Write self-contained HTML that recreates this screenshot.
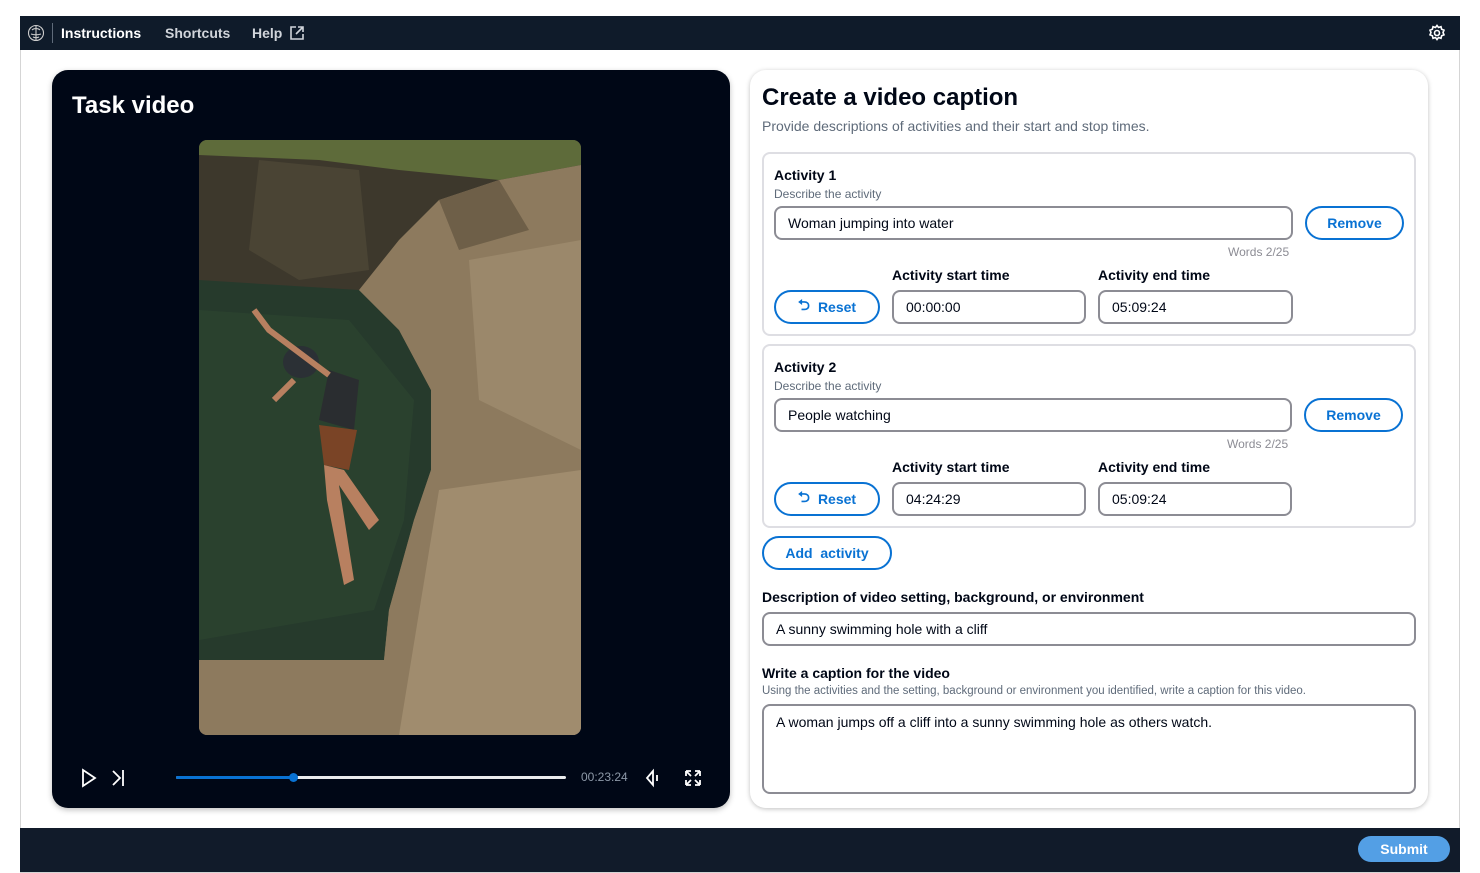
<!DOCTYPE html>
<html><head><meta charset="utf-8"><style>
*{box-sizing:border-box;margin:0;padding:0}
body{width:1480px;height:873px;background:#fff;font-family:"Liberation Sans",sans-serif;position:relative;overflow:hidden;color:#000716}
.frame{position:absolute;left:20px;top:16px;width:1440px;height:857px;border:1px solid #d5d5d5;background:#fff}
.nav{position:absolute;left:20px;top:16px;width:1440px;height:34px;background:#0f1b2a;color:#fff;font-weight:bold;font-size:14px}
.nav span{position:absolute;top:9px}
.foot{position:absolute;left:20px;top:828px;width:1440px;height:44px;background:#111b2a}
.submit{position:absolute;left:1358px;top:836px;width:92px;height:26px;border-radius:13px;background:#539fe5;color:#fff;font-weight:bold;font-size:14px;text-align:center;line-height:26px}
.vid{position:absolute;left:52px;top:70px;width:678px;height:738px;background:#000716;border-radius:16px;box-shadow:0 2px 6px rgba(0,0,0,.25)}
.card{position:absolute;left:750px;top:70px;width:678px;height:738px;background:#fff;border-radius:16px;box-shadow:0 1px 5px rgba(0,0,0,.25)}
.abs{position:absolute}
.box{position:absolute;border:2px solid #dedee3;border-radius:8px}
.inp{position:absolute;border:2px solid #8c8c94;border-radius:8px;font-size:14px;padding-left:12px;display:flex;align-items:center}
.btn{position:absolute;border:2px solid #0972d3;border-radius:18px;color:#0972d3;font-weight:bold;font-size:14px;display:flex;align-items:center;justify-content:center}
.lbl{position:absolute;font-size:14px;font-weight:bold}
.sub{position:absolute;font-size:12px;color:#5f6b7a}
</style></head><body>
<div class="frame"></div>
<div class="nav">
<svg class="abs" style="left:7px;top:8px" width="18" height="18" viewBox="0 0 18 18" fill="none" stroke="#ccc" stroke-width="1.1"><circle cx="9" cy="9" r="7.5"/><path d="M5 6c2-2 6-2 8 0M4 10c3 1 7 1 10 0M6 13c2 1 4 1 6 0M9 2v14"/></svg>
<div class="abs" style="left:32px;top:7px;width:1px;height:20px;background:#5f6b7a"></div>
<span style="left:41px">Instructions</span>
<span style="left:145px;color:#d1d5db">Shortcuts</span>
<span style="left:232px;color:#d1d5db">Help</span>
<svg class="abs" style="left:270px;top:10px" width="14" height="14" viewBox="0 0 14 14" fill="none" stroke="#d1d5db" stroke-width="1.6"><path d="M6 1H1v12h12V8M8 1h5v5M13 1L6 8"/></svg>
<svg class="abs" style="left:1408px;top:8px" width="18" height="18" viewBox="0 0 18 18" fill="none" stroke="#fff" stroke-width="1.6"><circle cx="9" cy="9" r="2.5"/><path d="M9 1.5l1.5 2 2.5-.8.6 2.5 2.4 1-1 2.3 1 2.3-2.4 1-.6 2.5-2.5-.8-1.5 2-1.5-2-2.5.8-.6-2.5-2.4-1 1-2.3-1-2.3 2.4-1 .6-2.5 2.5.8z"/></svg>
</div>

<div class="vid">
<div class="abs" style="left:20px;top:22px;color:#fff;font-weight:bold;font-size:24px">Task video</div>
<svg class="abs" style="left:147px;top:70px;border-radius:8px" width="382" height="595" viewBox="0 0 382 595">
<rect width="382" height="595" fill="#7d6b52"/>
<rect width="382" height="150" fill="#3d382c"/>
<path d="M0 0 L382 0 L382 25 L300 40 L200 30 L120 20 L0 15Z" fill="#5e6b3a"/>
<path d="M60 20 L160 30 L170 130 L100 140 L50 110Z" fill="#4a4434"/>
<path d="M0 140 L160 150 L200 190 L232 250 L232 330 L215 380 L190 470 L185 520 L60 520 L0 520Z" fill="#263a2c"/>
<path d="M0 170 L150 180 L215 260 L205 380 L175 470 L0 500Z" fill="#2c4430" opacity=".8"/>
<path d="M160 150 L200 100 L240 60 L300 40 L382 25 L382 595 L0 595 L0 520 L185 520 L190 470 L215 380 L232 330 L232 250 L200 190Z" fill="#8d7a5e"/>
<path d="M270 120 L382 100 L382 310 L280 260Z" fill="#9b886b"/>
<path d="M240 350 L382 330 L382 595 L200 595Z" fill="#a08c6e"/>
<path d="M240 60 L300 40 L330 90 L260 110Z" fill="#6e5f48"/>
<ellipse cx="102" cy="222" rx="18" ry="16" fill="#2b3035"/>
<path d="M130 230 L160 240 L155 290 L120 280Z" fill="#2a2d30"/>
<path d="M120 285 L158 290 L150 330 L125 325Z" fill="#7a4426"/>
<path d="M125 325 L145 330 L180 380 L170 390 L140 345 L155 440 L145 445 L128 360Z" fill="#b88060"/>
<path d="M130 235 L70 190 L55 170" stroke="#b88060" stroke-width="6" fill="none"/>
<path d="M95 240 L75 260" stroke="#b88060" stroke-width="6"/>
</svg>
<svg class="abs" style="left:28px;top:698px" width="18" height="20" viewBox="0 0 18 20" fill="none" stroke="#fff" stroke-width="1.8"><path d="M3 2l12 8-12 8z"/></svg>
<svg class="abs" style="left:58px;top:698px" width="16" height="20" viewBox="0 0 16 20" fill="none" stroke="#fff" stroke-width="1.8"><path d="M3 3l7 7-7 7M13 2v16"/></svg>
<div class="abs" style="left:124px;top:706px;width:390px;height:3px;background:#e9ebed;border-radius:2px"></div>
<div class="abs" style="left:124px;top:706px;width:118px;height:3px;background:#0972d3;border-radius:2px"></div>
<div class="abs" style="left:237px;top:703px;width:9px;height:9px;background:#0972d3;border-radius:50%"></div>
<div class="abs" style="left:529px;top:700px;color:#8d99a8;font-size:12px">00:23:24</div>
<svg class="abs" style="left:592px;top:698px" width="16" height="20" viewBox="0 0 16 20" fill="none" stroke="#fff" stroke-width="1.8"><path d="M9 3L3 10l6 7zM13 7v6"/></svg>
<svg class="abs" style="left:633px;top:700px" width="16" height="16" viewBox="0 0 16 16" fill="none" stroke="#fff" stroke-width="1.8"><path d="M1 1h5M1 1v5M1 1l5 5M15 1h-5M15 1v5M15 1l-5 5M1 15h5M1 15v-5M1 15l5-5M15 15h-5M15 15v-5M15 15l-5-5"/></svg>
</div>

<div class="card">
<div class="abs" style="left:12px;top:14px;font-weight:bold;font-size:24px">Create a video caption</div>
<div class="abs" style="left:12px;top:48px;font-size:14px;color:#5f6b7a">Provide descriptions of activities and their start and stop times.</div>

<div class="box" style="left:12px;top:82px;width:654px;height:184px"></div>
<div class="lbl" style="left:24px;top:97px">Activity 1</div>
<div class="sub" style="left:24px;top:117px">Describe the activity</div>
<div class="inp" style="left:24px;top:136px;width:519px;height:34px">Woman jumping into water</div>
<div class="btn" style="left:555px;top:136px;width:99px;height:34px">Remove</div>
<div class="sub" style="left:478px;top:175px;color:#8c8c94">Words 2/25</div>
<div class="lbl" style="left:142px;top:197px">Activity start time</div>
<div class="lbl" style="left:348px;top:197px">Activity end time</div>
<div class="btn" style="left:24px;top:220px;width:106px;height:34px"><span style="font-size:15px;margin-right:8px">⮌</span>Reset</div>
<div class="inp" style="left:142px;top:220px;width:194px;height:34px">00:00:00</div>
<div class="inp" style="left:348px;top:220px;width:195px;height:34px">05:09:24</div>

<div class="box" style="left:12px;top:274px;width:654px;height:184px"></div>
<div class="lbl" style="left:24px;top:289px">Activity 2</div>
<div class="sub" style="left:24px;top:309px">Describe the activity</div>
<div class="inp" style="left:24px;top:328px;width:518px;height:34px">People watching</div>
<div class="btn" style="left:554px;top:328px;width:99px;height:34px">Remove</div>
<div class="sub" style="left:477px;top:367px;color:#8c8c94">Words 2/25</div>
<div class="lbl" style="left:142px;top:389px">Activity start time</div>
<div class="lbl" style="left:348px;top:389px">Activity end time</div>
<div class="btn" style="left:24px;top:412px;width:106px;height:34px"><span style="font-size:15px;margin-right:8px">⮌</span>Reset</div>
<div class="inp" style="left:142px;top:412px;width:194px;height:34px">04:24:29</div>
<div class="inp" style="left:348px;top:412px;width:194px;height:34px">05:09:24</div>

<div class="btn" style="left:12px;top:466px;width:130px;height:34px">Add&nbsp; activity</div>
<div class="lbl" style="left:12px;top:519px">Description of video setting, background, or environment</div>
<div class="inp" style="left:12px;top:542px;width:654px;height:34px">A sunny swimming hole with a cliff</div>
<div class="lbl" style="left:12px;top:595px">Write a caption for the video</div>
<div class="sub" style="left:12px;top:615px;font-size:11.5px">Using the activities and the setting, background or environment you identified, write a caption for this video.</div>
<div class="inp" style="left:12px;top:634px;width:654px;height:90px;align-items:flex-start;padding-top:8px">A woman jumps off a cliff into a sunny swimming hole as others watch.</div>
</div>

<div class="foot"></div>
<div class="submit">Submit</div>
</body></html>
